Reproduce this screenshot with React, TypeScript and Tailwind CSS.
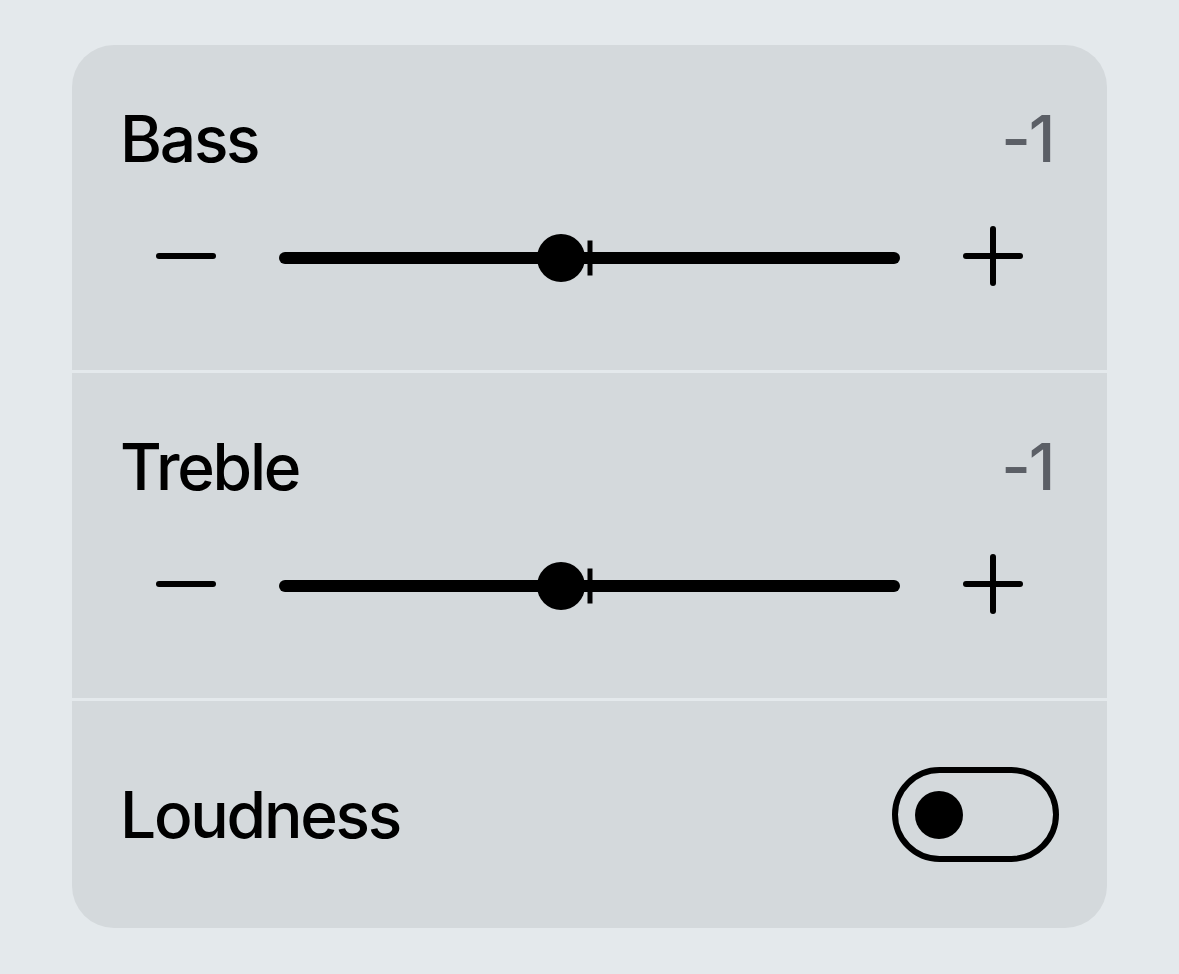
import React from 'react';

type SliderRowProps = {
  label: string;
  value: number;
  min?: number;
  max?: number;
};

function MinusIcon() {
  return (
    <svg width="60" height="60" viewBox="0 0 60 60" className="shrink-0">
      <line x1="3" y1="30" x2="57" y2="30" stroke="black" strokeWidth="6" strokeLinecap="round" />
    </svg>
  );
}

function PlusIcon() {
  return (
    <svg width="60" height="60" viewBox="0 0 60 60" className="shrink-0">
      <line x1="3" y1="30" x2="57" y2="30" stroke="black" strokeWidth="6" strokeLinecap="round" />
      <line x1="30" y1="3" x2="30" y2="57" stroke="black" strokeWidth="6" strokeLinecap="round" />
    </svg>
  );
}

function SliderSection({ label, value, min = -10, max = 10 }: SliderRowProps) {
  const pct = ((value - min) / (max - min)) * 100;

  return (
    <div className="h-[325px] bg-[#d4d9dc] pt-[62px]">
      {/* Title row */}
      <div className="flex items-center justify-between px-[48px] text-[64px] font-medium leading-none tracking-[-0.035em]">
        <span className="text-black">{label}</span>
        <span className="mr-[6px] text-[#5b5f66]">{value}</span>
      </div>

      {/* Slider row */}
      <div className="mt-[55px] flex items-center gap-[63px] px-[84px]">
        <MinusIcon />
        <div className="relative mt-[3px] h-[12px] flex-1 rounded-full bg-black">
          {/* centre tick */}
          <div className="absolute left-1/2 top-1/2 h-[35px] w-[5px] -translate-x-1/2 -translate-y-1/2 bg-black" />
          {/* thumb */}
          <div
            className="absolute top-1/2 h-[48px] w-[48px] -translate-x-1/2 -translate-y-1/2 rounded-full bg-black"
            style={{ left: `calc(${pct}% + 3px)` }}
          />
        </div>
        <PlusIcon />
      </div>
    </div>
  );
}

export default function App() {
  const [loudness, setLoudness] = React.useState(false);

  return (
    <div
      className="flex min-h-[974px] w-full justify-center bg-[#e4e9ec] pt-[45px]"
      style={{ fontFamily: 'Inter, "Noto Sans", sans-serif' }}
    >
      <div className="flex h-[883px] w-[1035px] flex-col gap-[3px] overflow-hidden rounded-[42px]">
        <SliderSection label="Bass" value={-1} />
        <SliderSection label="Treble" value={-1} />

        {/* Loudness */}
        <div className="flex flex-1 items-center justify-between bg-[#d4d9dc] px-[48px]">
          <span className="text-[64px] font-medium leading-none tracking-[-0.035em] text-black">Loudness</span>
          <button
            onClick={() => setLoudness(!loudness)}
            className={`flex h-[95px] w-[167px] items-center rounded-full border-[6px] border-black px-[17px] ${
              loudness ? 'justify-end' : 'justify-start'
            }`}
            aria-label="Loudness"
          >
            <span className="block h-[48px] w-[48px] rounded-full bg-black" />
          </button>
        </div>
      </div>
    </div>
  );
}
